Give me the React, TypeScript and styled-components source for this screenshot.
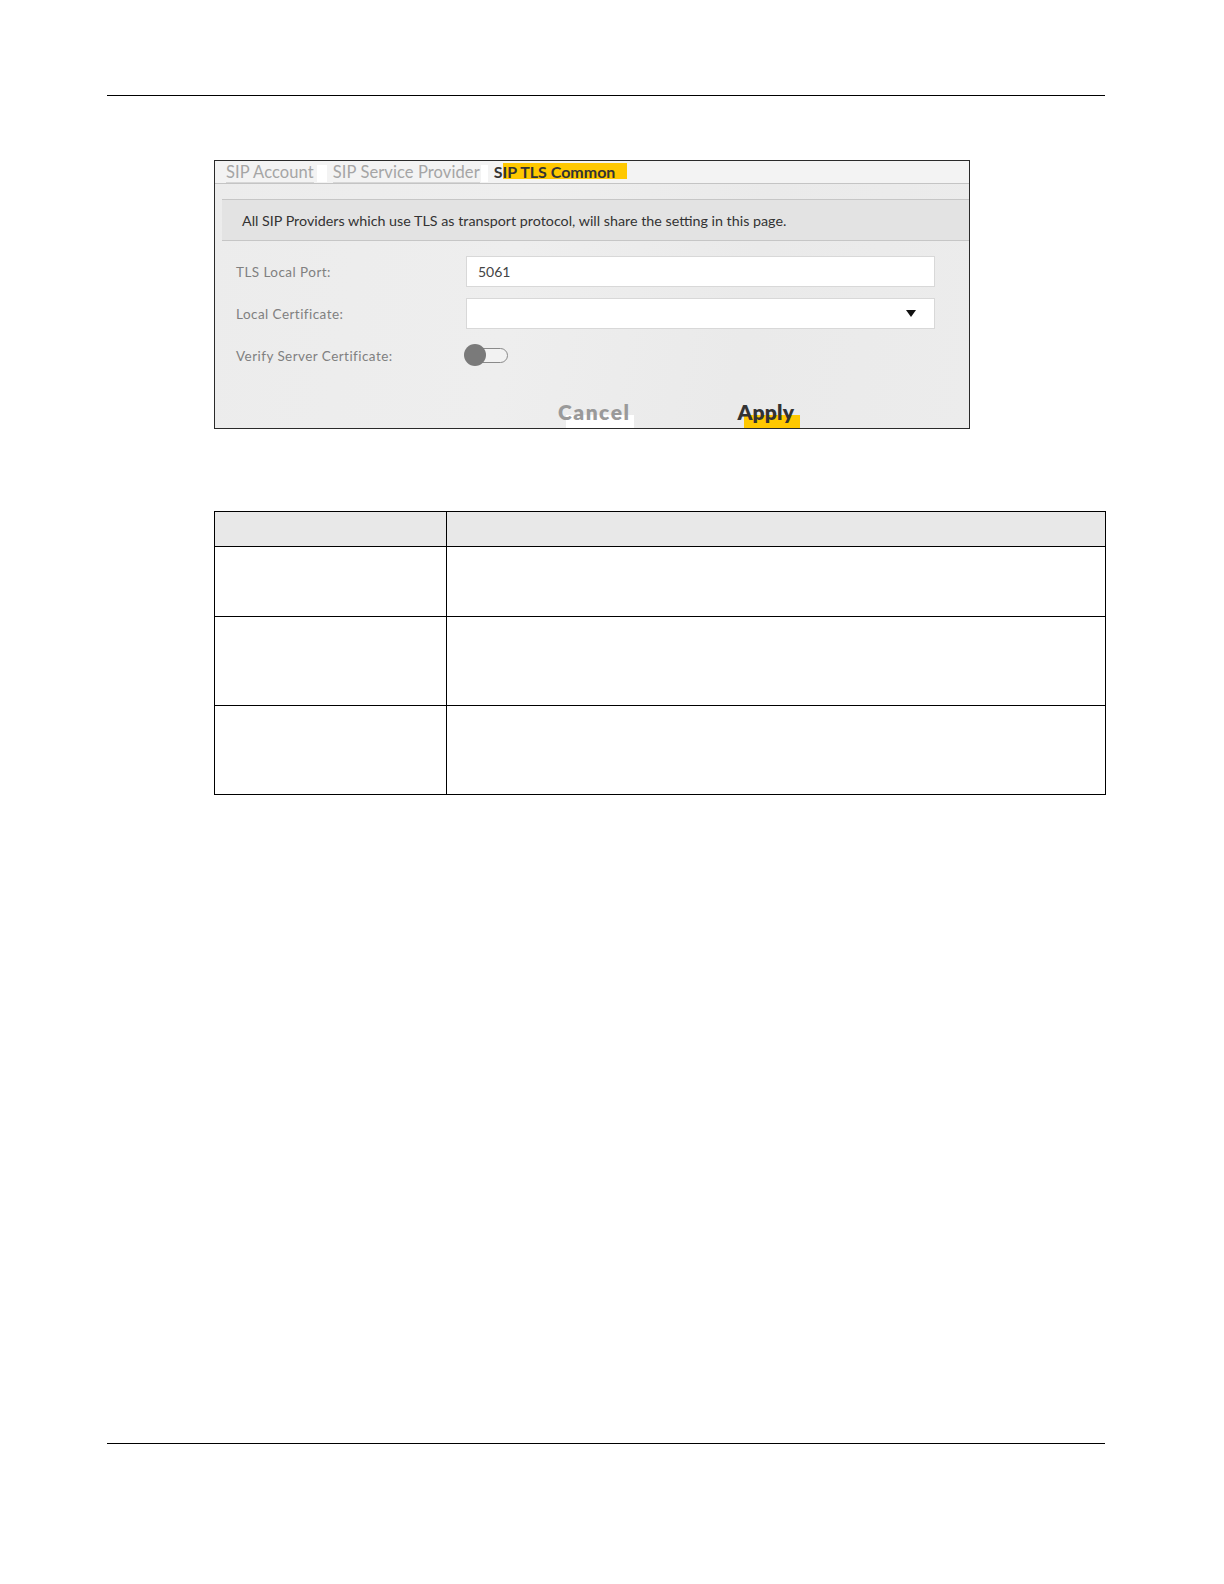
import React from "react";
import styled, { createGlobalStyle } from "styled-components";

const Global = createGlobalStyle`
  html, body { margin: 0; padding: 0; background: #ffffff; }
  body { font-family: "Lato", "DejaVu Sans", sans-serif; }
`;

const Page = styled.div`
  width: 100%;
  height: 1584px;
  overflow: hidden;
  display: flex;
  flex-direction: column;
  box-sizing: border-box;
  padding-top: 95px;
`;

const Rule = styled.div`
  margin-left: 107px;
  width: 998px;
  height: 1px;
  flex: none;
  background: #000;
`;

const Shot = styled.div`
  margin-top: 64px;
  margin-left: 214px;
  width: 756px;
  height: 269px;
  flex: none;
  box-sizing: border-box;
  border: 1px solid #2a2a2a;
  background: linear-gradient(100deg, #ececec 0%, #eeeeee 40%, #eaeaea 70%, #ececec 100%);
  overflow: hidden;
  display: flex;
  flex-direction: column;
`;

const TabBar = styled.div`
  height: 22px;
  flex: none;
  display: flex;
  align-items: flex-end;
  padding-left: 11px;
  background: #f3f3f3;
  border-bottom: 1px solid #c4c4c4;
`;

const Tab = styled.div<{ $active?: boolean }>`
  font-family: "Lato", sans-serif;
  font-size: ${(p) => (p.$active ? 16 : 16.5)}px;
  letter-spacing: ${(p) => (p.$active ? 0 : 0.1)}px;
  line-height: 20px;
  height: 20px;
  color: ${(p) => (p.$active ? "#333" : "#a5a5a5")};
  font-weight: ${(p) => (p.$active ? 700 : 400)};
  white-space: nowrap;
  border-bottom: ${(p) => (p.$active ? "1px solid transparent" : "1px solid #d6d6d6")};
`;

const TabGap = styled.div<{ $w: number }>`
  width: ${(p) => p.$w}px;
  height: 17px;
  background: #ffffff;
  margin-bottom: 1px;
`;

const Spacer = styled.div<{ $w: number }>`
  width: ${(p) => p.$w}px;
  flex: none;
`;

const Highlight = styled.span`
  background: #ffc800;
  padding: 1px 12px 0 0;
  display: inline-block;
  line-height: 15px;
  height: 15px;
`;

const Info = styled.div`
  margin-top: 15px;
  margin-left: 7px;
  height: 39px;
  flex: none;
  background: #e3e3e3;
  border-top: 1px solid #c6c6c6;
  border-bottom: 1px solid #c6c6c6;
  display: flex;
  align-items: center;
  padding-left: 20px;
  padding-top: 1px;
  font-family: "Lato", sans-serif;
  font-size: 14.3px;
  color: #333;
`;

const Form = styled.div`
  margin-top: 15px;
  padding-left: 21px;
  display: grid;
  grid-template-columns: 230px 469px;
  row-gap: 11px;
  align-items: center;
`;

const Label = styled.div`
  font-family: "Lato", sans-serif;
  font-size: 13.5px;
  letter-spacing: 0.45px;
  color: #808080;
`;

const Field = styled.div`
  height: 31px;
  box-sizing: border-box;
  background: #ffffff;
  border: 1px solid #d8d8d8;
  display: flex;
  align-items: center;
  justify-content: space-between;
  padding: 0 18px 0 11px;
  font-family: "Lato", sans-serif;
  font-size: 14px;
  color: #444;
`;

const Arrow = styled.div`
  width: 0;
  height: 0;
  border-left: 5px solid transparent;
  border-right: 5px solid transparent;
  border-top: 7px solid #111;
`;

const ToggleWrap = styled.div`
  position: relative;
  width: 44px;
  height: 31px;
  margin-left: -2px;
`;

const Track = styled.div`
  position: absolute;
  left: 10px;
  top: 8px;
  width: 32px;
  height: 13px;
  border: 1px solid #8a8a8a;
  border-radius: 8px;
  background: #f2f2f2;
`;

const Knob = styled.div`
  position: absolute;
  left: 0;
  top: 4px;
  width: 22px;
  height: 22px;
  border-radius: 50%;
  background: #7a7a7a;
`;

const Buttons = styled.div`
  margin-top: 29px;
  display: flex;
  padding-left: 343px;
  gap: 107px;
`;

const Btn = styled.div<{ $primary?: boolean }>`
  position: relative;
  font-family: "Lato", sans-serif;
  font-weight: 800;
  font-size: 21px;
  letter-spacing: ${(p) => (p.$primary ? 0.2 : 1.5)}px;
  line-height: 24px;
  color: ${(p) => (p.$primary ? "#333" : "#9a9a9a")};
  z-index: 0;
`;

const BtnMark = styled.div<{ $primary?: boolean }>`
  position: absolute;
  left: ${(p) => (p.$primary ? 7 : 8)}px;
  right: ${(p) => (p.$primary ? -6 : -4)}px;
  top: 15px;
  height: 14px;
  background: ${(p) => (p.$primary ? "#ffc800" : "#ffffff")};
  z-index: -1;
`;

const Table = styled.div`
  margin-top: 82px;
  margin-left: 214px;
  width: 892px;
  flex: none;
  display: grid;
  grid-template-columns: 232px 1fr;
  grid-template-rows: 35px 70px 89px 89px;
  border-top: 1.5px solid #000;
  border-left: 1.5px solid #000;
  box-sizing: border-box;
`;

const Cell = styled.div<{ $head?: boolean }>`
  border-right: 1.5px solid #000;
  border-bottom: 1.5px solid #000;
  background: ${(p) => (p.$head ? "#e8e8e8" : "#fff")};
`;

const Grow = styled.div`
  flex: 1;
`;

const Foot = styled.div`
  height: 140px;
  flex: none;
`;

export default function App() {
  return (
    <>
      <Global />
      <Page>
        <Rule />
        <Shot>
          <TabBar>
            <Tab>SIP Account</Tab>
            <Spacer $w={3} />
            <TabGap $w={10} />
            <Spacer $w={6} />
            <Tab>SIP Service Provider</Tab>
            <Spacer $w={1} />
            <TabGap $w={7} />
            <Spacer $w={6} />
            <Tab $active>
              S<Highlight>IP TLS Common</Highlight>
            </Tab>
          </TabBar>
          <Info>
            All SIP Providers which use TLS as transport protocol, will share the setting in this page.
          </Info>
          <Form>
            <Label>TLS Local Port:</Label>
            <Field>5061</Field>
            <Label>Local Certificate:</Label>
            <Field>
              <span />
              <Arrow />
            </Field>
            <Label>Verify Server Certificate:</Label>
            <ToggleWrap>
              <Track />
              <Knob />
            </ToggleWrap>
          </Form>
          <Buttons>
            <Btn>
              <BtnMark />
              Cancel
            </Btn>
            <Btn $primary>
              <BtnMark $primary />
              Apply
            </Btn>
          </Buttons>
        </Shot>
        <Table>
          <Cell $head />
          <Cell $head />
          <Cell />
          <Cell />
          <Cell />
          <Cell />
          <Cell />
          <Cell />
        </Table>
        <Grow />
        <Rule />
        <Foot />
      </Page>
    </>
  );
}
